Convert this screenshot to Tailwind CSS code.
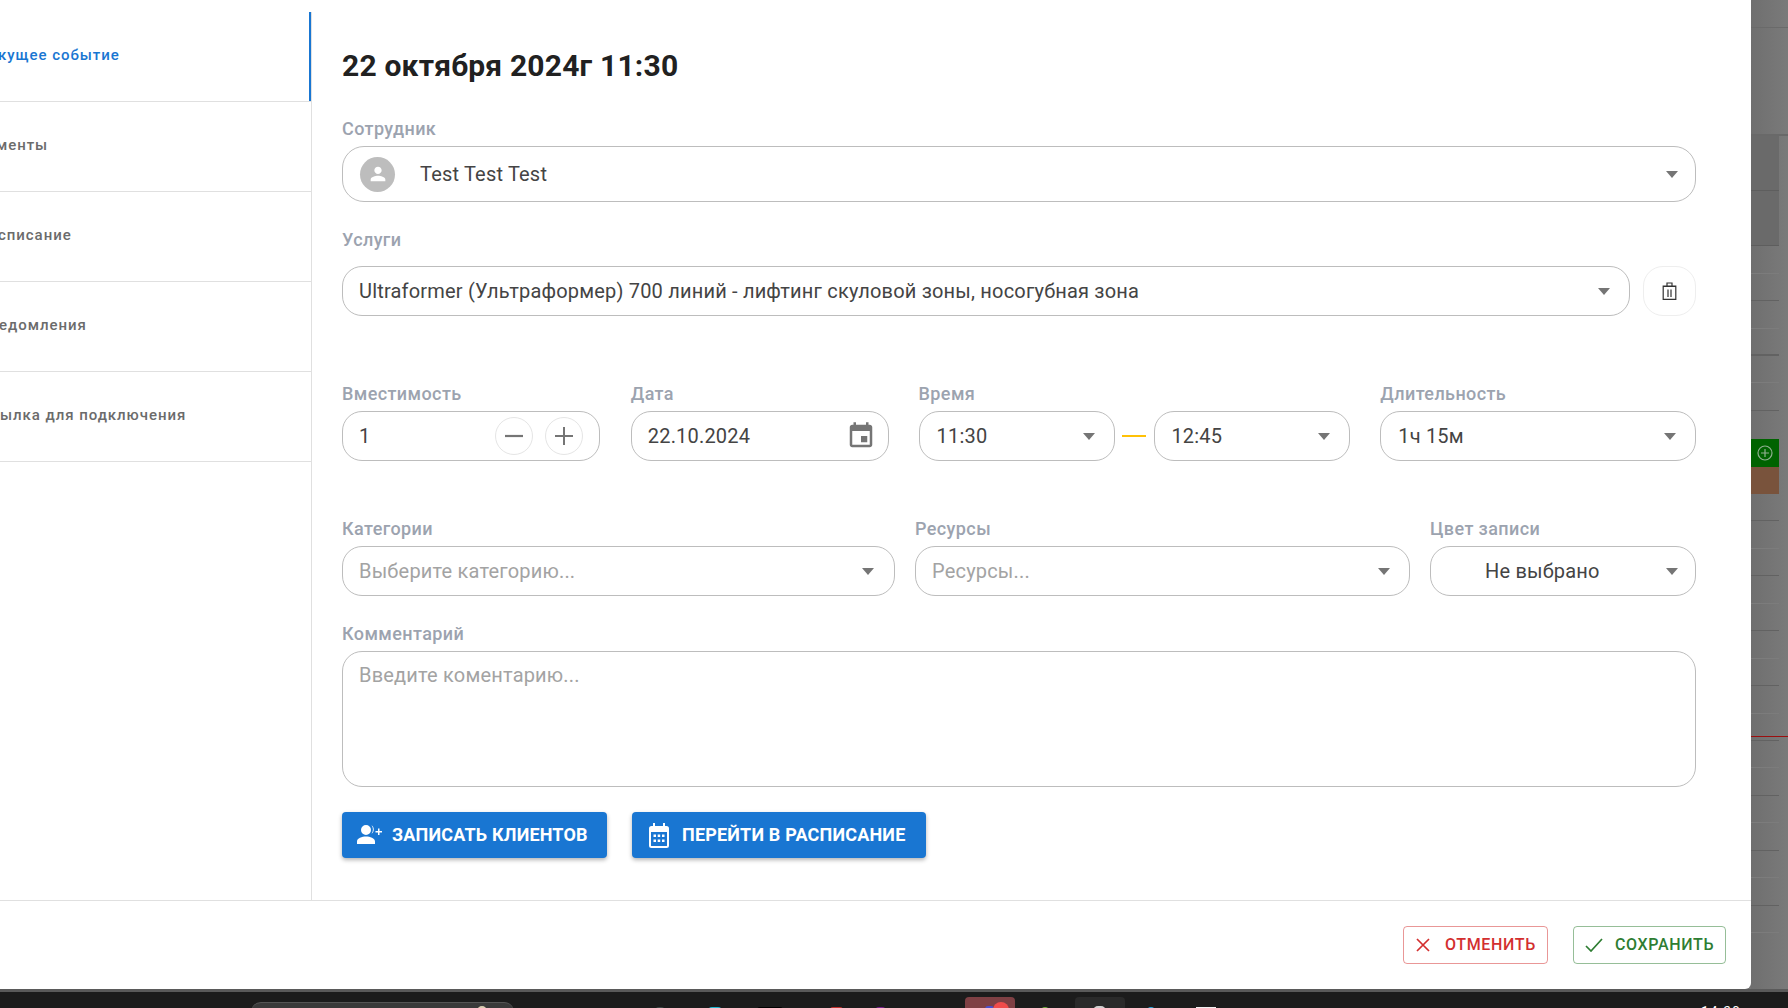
<!DOCTYPE html>
<html lang="ru">

<head>
  <meta charset="UTF-8">
  <title>Событие</title>
  <script src="https://cdn.jsdelivr.net/npm/@tailwindcss/browser@4"></script>
</head>

<body class="relative h-[1008px] w-[1788px] overflow-hidden bg-[#757575] font-['Roboto',sans-serif]">

  <!-- Calendar behind the dialog -->
  <div class="absolute left-[1751px] top-0 h-[992px] w-[37px] bg-gradient-to-r from-[#6f6f6f] to-[#7a7a7a]">
    <div class="h-[28px] border-b border-[#6a6a6a]"></div>
    <div class="h-[108px] border-b-2 border-[#696969]"></div>
    <div class="w-[28px]">
      <div class="h-[55px] border-b border-[#5e5e5e] bg-[#6a6a6a]"></div>
      <div class="h-[55px] border-b border-[#5e5e5e] bg-[#6a6a6a]"></div>
      <div class="h-[28px] border-b border-[#7c7c7c]"></div>
      <div class="h-[27px] border-b border-[#626262]"></div>
      <div class="h-[28px] border-b border-[#7c7c7c]"></div>
      <div class="h-[27px] border-b-2 border-[#626262]"></div>
      <div class="h-[27px] border-b border-[#7c7c7c]"></div>
      <div class="h-[28px] border-b border-[#626262]"></div>
      <div class="h-[28px]"></div>
      <div class="relative flex h-[28px] items-center justify-center bg-[#006300]">
        <svg class="h-[16px] w-[16px]" viewBox="0 0 16 16" fill="none" stroke="#8fb08f" stroke-width="1.2">
          <circle cx="8" cy="8" r="7"></circle>
          <path d="M8 4v8M4 8h8"></path>
        </svg>
      </div>
      <div class="h-[27px] bg-[#79533c]"></div>
      <div class="h-[27px] border-b border-[#626262]"></div>
      <div class="h-[28px] border-b border-[#7c7c7c]"></div>
      <div class="h-[27px] border-b border-[#626262]"></div>
      <div class="h-[28px] border-b border-[#7c7c7c]"></div>
      <div class="h-[27px] border-b border-[#626262]"></div>
      <div class="h-[28px] border-b border-[#7c7c7c]"></div>
      <div class="h-[27px] border-b border-[#626262]"></div>
      <div class="h-[28px] border-b border-[#7c7c7c]"></div>
      <div class="h-[27px] border-b border-[#626262]"></div>
      <div class="h-[27px] border-b border-[#7c7c7c]"></div>
      <div class="h-[28px] border-b border-[#626262]"></div>
      <div class="h-[27px] border-b border-[#7c7c7c]"></div>
      <div class="h-[28px] border-b border-[#626262]"></div>
      <div class="h-[27px] border-b border-[#7c7c7c]"></div>
      <div class="h-[28px] border-b border-[#626262]"></div>
      <div class="h-[27px] border-b border-[#7c7c7c]"></div>
    </div>
    <div class="absolute left-0 right-0 top-[736px] h-px bg-[#9c0f0f]"></div>
  </div>

  <!-- Dialog -->
  <div class="absolute left-0 top-0 flex h-[989px] w-[1751px] flex-col rounded-br-[6px] bg-white">
    <div class="flex h-[901px] border-b border-[#e0e0e0]">

      <!-- Tabs -->
      <nav class="mt-[12px] flex w-[312px] flex-none flex-col border-r border-[#e0e0e0] text-[15px] font-medium tracking-[0.95px] text-[#6b6b6b]">
        <div class="flex h-[89px] items-start whitespace-nowrap border-r-2 border-[#1976d2] pt-[32px] text-[#1976d2]"><span class="-ml-[2px]">кущее событие</span></div>
        <div class="flex h-[90px] items-center whitespace-nowrap border-t border-[#e0e0e0] pb-[2px]"><span class="-ml-[4px]">менты</span></div>
        <div class="flex h-[90px] items-center whitespace-nowrap border-t border-[#e0e0e0] pb-[2px]"><span class="-ml-[2px]">списание</span></div>
        <div class="flex h-[90px] items-center whitespace-nowrap border-t border-[#e0e0e0] pb-[2px]"><span class="-ml-px">едомления</span></div>
        <div class="flex h-[91px] items-center whitespace-nowrap border-y border-[#e0e0e0] pb-[2px]">ылка для подключения</div>
      </nav>

      <!-- Form -->
      <div class="ml-[30px] w-[1354px] flex-none text-[20px] tracking-[0.19px] text-[#444444]">
        <h1 class="mt-[48px] h-[36px] text-[30px] font-bold leading-[36px] tracking-[0.2px] text-[#212121]">22 октября 2024г 11:30</h1>

        <label class="mt-[33px] block h-[29px] text-[18px] font-medium leading-[24px] tracking-[0.4px] text-[#9ca3af]">Сотрудник</label>
        <div class="flex h-[56px] items-center rounded-[22px] border border-[#bdbdbd] pl-[17px] pr-[17px]">
          <span class="flex h-[35px] w-[35px] items-center justify-center rounded-full bg-[#bdbdbd]">
            <svg class="h-[22px] w-[22px]" viewBox="0 0 24 24" fill="#fff">
              <path d="M12 12c2.21 0 4-1.79 4-4s-1.79-4-4-4-4 1.79-4 4 1.79 4 4 4zm0 2c-2.67 0-8 1.34-8 4v2h16v-2c0-2.66-5.33-4-8-4z"></path>
            </svg>
          </span>
          <span class="ml-[25px] flex-1">Test Test Test</span>
          <span class="h-0 w-0 border-x-[6.5px] border-t-[7px] border-x-transparent border-t-[#757575]"></span>
        </div>

        <label class="mt-[26px] block h-[38px] text-[18px] font-medium leading-[24px] tracking-[0.4px] text-[#9ca3af]">Услуги</label>
        <div class="flex gap-[13px]">
          <div class="flex h-[50px] flex-1 items-center rounded-[20px] border border-[#bdbdbd] pl-[16px] pr-[19px]">
            <span class="flex-1">Ultraformer (Ультраформер) 700 линий - лифтинг скуловой зоны, носогубная зона</span>
            <span class="h-0 w-0 border-x-[6.5px] border-t-[7px] border-x-transparent border-t-[#757575]"></span>
          </div>
          <button class="flex h-[50px] w-[53px] items-center justify-center rounded-[20px] border border-[#eeeeee]">
            <svg class="h-[18px] w-[15px]" viewBox="0 0 15 18" fill="none" stroke="#333" stroke-width="1.2">
              <path d="M1.200 4.500h12.600v12.900H1.200zM.6 4.200h13.800M5 4V1h5v3M6 7.500v7.500M9 7.500v7.500"></path>
            </svg>
          </button>
        </div>

        <!-- Capacity, date and time -->
        <div class="mt-[66px] flex">
          <div class="w-[258px]">
            <label class="block h-[29px] text-[18px] font-medium leading-[24px] tracking-[0.4px] text-[#9ca3af]">Вместимость</label>
            <div class="flex h-[50px] items-center rounded-[20px] border border-[#bdbdbd] pl-[16px] pr-[16px]">
              <span class="flex-1">1</span>
              <span class="flex h-[38px] w-[38px] items-center justify-center rounded-full border border-[#e5e5e5]">
                <svg class="h-[18px] w-[18px]" viewBox="0 0 18 18" stroke="#757575" stroke-width="2.2"><path d="M0 9h18"></path></svg>
              </span>
              <span class="ml-[12px] flex h-[38px] w-[38px] items-center justify-center rounded-full border border-[#e5e5e5]">
                <svg class="h-[18px] w-[18px]" viewBox="0 0 18 18" stroke="#757575" stroke-width="2"><path d="M0 9h18M9 0v18"></path></svg>
              </span>
            </div>
          </div>
          <div class="ml-[31px] w-[258px]">
            <label class="block h-[29px] text-[18px] font-medium leading-[24px] tracking-[0.4px] text-[#9ca3af]">Дата</label>
            <div class="flex h-[50px] items-center rounded-[20px] border border-[#bdbdbd] pl-[16px] pr-[12px]">
              <span class="flex-1">22.10.2024</span>
              <svg class="h-[30px] w-[30px]" viewBox="0 0 24 24" fill="#757575">
                <path d="M17 12h-5v5h5v-5zM16 1v2H8V1H6v2H5c-1.11 0-1.990.9-1.990 2L3 19c0 1.100.89 2 2 2h14c1.100 0 2-.9 2-2V5c0-1.100-.9-2-2-2h-1V1h-2zm3 18H5V8h14v11z"></path>
              </svg>
            </div>
          </div>
          <div class="ml-[30px] w-[197px]">
            <label class="block h-[29px] text-[18px] font-medium leading-[24px] tracking-[0.4px] text-[#9ca3af]">Время</label>
            <div class="flex h-[50px] items-center rounded-[20px] border border-[#bdbdbd] pl-[17px] pr-[19px]">
              <span class="flex-1">11:30</span>
              <span class="h-0 w-0 border-x-[6.5px] border-t-[7px] border-x-transparent border-t-[#757575]"></span>
            </div>
          </div>
          <div class="ml-[7px] mr-[8px] mt-[53px] h-[2px] w-[24px] bg-[#ffc107]"></div>
          <div class="mt-[29px] flex h-[50px] w-[196px] items-center rounded-[20px] border border-[#bdbdbd] pl-[16px] pr-[19px]">
            <span class="flex-1">12:45</span>
            <span class="h-0 w-0 border-x-[6.5px] border-t-[7px] border-x-transparent border-t-[#757575]"></span>
          </div>
          <div class="ml-[30px] w-[316px]">
            <label class="block h-[29px] text-[18px] font-medium leading-[24px] tracking-[0.4px] text-[#9ca3af]">Длительность</label>
            <div class="flex h-[50px] items-center rounded-[20px] border border-[#bdbdbd] pl-[17px] pr-[19px]">
              <span class="flex-1">1ч 15м</span>
              <span class="h-0 w-0 border-x-[6.5px] border-t-[7px] border-x-transparent border-t-[#757575]"></span>
            </div>
          </div>
        </div>

        <!-- Categories, resources, colour -->
        <div class="mt-[56px] flex">
          <div class="w-[553px]">
            <label class="block h-[29px] text-[18px] font-medium leading-[24px] tracking-[0.4px] text-[#9ca3af]">Категории</label>
            <div class="flex h-[50px] items-center rounded-[20px] border border-[#bdbdbd] pl-[16px] pr-[20px] text-[#a3a3a3]">
              <span class="flex-1">Выберите категорию...</span>
              <span class="h-0 w-0 border-x-[6.5px] border-t-[7px] border-x-transparent border-t-[#757575]"></span>
            </div>
          </div>
          <div class="ml-[20px] w-[495px]">
            <label class="block h-[29px] text-[18px] font-medium leading-[24px] tracking-[0.4px] text-[#9ca3af]">Ресурсы</label>
            <div class="flex h-[50px] items-center rounded-[20px] border border-[#bdbdbd] pl-[16px] pr-[19px] text-[#a3a3a3]">
              <span class="flex-1">Ресурсы...</span>
              <span class="h-0 w-0 border-x-[6.5px] border-t-[7px] border-x-transparent border-t-[#757575]"></span>
            </div>
          </div>
          <div class="ml-[20px] w-[266px]">
            <label class="block h-[29px] text-[18px] font-medium leading-[24px] tracking-[0.4px] text-[#9ca3af]">Цвет записи</label>
            <div class="flex h-[50px] items-center rounded-[20px] border border-[#bdbdbd] pl-[54px] pr-[17px]">
              <span class="flex-1">Не выбрано</span>
              <span class="h-0 w-0 border-x-[6.5px] border-t-[7px] border-x-transparent border-t-[#757575]"></span>
            </div>
          </div>
        </div>

        <label class="mt-[26px] block h-[29px] text-[18px] font-medium leading-[24px] tracking-[0.4px] text-[#9ca3af]">Комментарий</label>
        <div class="h-[136px] rounded-[20px] border border-[#bdbdbd] px-[16px] pt-[8px] text-[#a3a3a3]">Введите коментарию...</div>

        <div class="mt-[25px] flex gap-[25px] text-[18px] font-bold tracking-[0.18px] text-white">
          <button class="flex h-[46px] w-[265px] items-center rounded-[4px] bg-[#1976d2] pl-[14px] uppercase shadow-[0_2px_4px_rgba(0,0,0,0.3)]">
            <svg class="h-[26px] w-[26px]" viewBox="0 0 26 26" fill="#fff">
              <path d="M10 3a5 5 0 1 1 0 10 5 5 0 0 1 0-10zM1 22v-2.500c0-3.500 5-5 9-5s9 1.500 9 5V22zM15.500 3.200c3 1.500 3 7 0 8.600 1.900-2.500 1.900-6 0-8.600zM19.500 9h2.500V6.500h1.500V9H26v1.500h-2.500V13H22v-2.500h-2.500z"></path>
            </svg>
            <span class="-mt-[2px] ml-[10px]">Записать клиентов</span>
          </button>
          <button class="flex h-[46px] w-[294px] items-center rounded-[4px] bg-[#1976d2] pl-[17px] uppercase shadow-[0_2px_4px_rgba(0,0,0,0.3)]">
            <svg class="h-[26px] w-[20px]" viewBox="0 0 20 26" fill="#fff">
              <path d="M4 1h2v3h8V1h2v3h1.500A2.500 2.500 0 0 1 20 6.500v17a2.500 2.500 0 0 1-2.500 2.500h-15A2.500 2.500 0 0 1 0 23.500v-17A2.500 2.500 0 0 1 2.500 4H4zM2 10v13.500a.5.500 0 0 0 .5.500h15a.5.500 0 0 0 .5-.5V10zM4.500 12.500h2.500V15H4.500zM8.700 12.500h2.500V15H8.700zM13 12.500h2.500V15H13zM4.500 17.500h2.500V20H4.500zM8.700 17.500h2.500V20H8.700zM13 17.500h2.500V20H13z"></path>
            </svg>
            <span class="-mt-[2px] ml-[13px]">Перейти в расписание</span>
          </button>
        </div>
      </div>
    </div>

    <!-- Footer -->
    <div class="flex flex-1 items-start justify-end gap-[25px] pr-[25px] pt-[25px] text-[16px] font-medium tracking-[0.65px]">
      <button class="flex h-[38px] w-[145px] items-center rounded-[4px] border border-[#d32f2f]/50 pl-[12px] uppercase text-[#d32f2f]">
        <svg class="h-[14px] w-[14px]" viewBox="0 0 14 14" stroke="#d32f2f" stroke-width="1.7"><path d="M1 1l12 12M13 1L1 13"></path></svg>
        <span class="ml-[15px]">Отменить</span>
      </button>
      <button class="flex h-[38px] w-[153px] items-center rounded-[4px] border border-[#2e7d32]/50 pl-[11px] uppercase text-[#2e7d32]">
        <svg class="h-[14px] w-[18px]" viewBox="0 0 18 14" fill="none" stroke="#2e7d32" stroke-width="1.7"><path d="M1 8l5 5L17 1"></path></svg>
        <span class="ml-[12px]">Сохранить</span>
      </button>
    </div>
  </div>

  <!-- Taskbar, cut off by the window bottom -->
  <div class="absolute inset-x-0 bottom-0 h-[19px] border-t-[3px] border-[#5a5a5a] bg-[#1c1c1c]">
    <div class="absolute left-[251px] top-[10px] h-[10px] w-[263px] rounded-t-[14px] border-t border-[#555] bg-[#3a3a3a]"></div>
    <div class="absolute left-[477px] top-[14px] h-[6px] w-[10px] rounded-t-full bg-[#d8cdb0]"></div>
    <div class="absolute left-[655px] top-[15px] h-[4px] w-[10px] rounded-t-full bg-[#3f4a48]"></div>
    <div class="absolute left-[708px] top-[15px] h-[4px] w-[14px] rounded-t-full bg-[#1fb6d0]"></div>
    <div class="absolute left-[757px] top-[15px] h-[4px] w-[26px] rounded-t-[3px] bg-black"></div>
    <div class="absolute left-[830px] top-[15px] h-[4px] w-[13px] rounded-t-[3px] bg-[#c0302c]"></div>
    <div class="absolute left-[875px] top-[15px] h-[4px] w-[11px] rounded-t-full bg-[#7a1f8f]"></div>
    <div class="absolute left-[965px] top-[5px] h-[14px] w-[50px] rounded-t-[4px] bg-[#7f4044]"></div>
    <div class="absolute left-[985px] top-[14px] h-[6px] w-[9px] rounded-t-[3px] bg-[#4a4fd0]"></div>
    <div class="absolute left-[993px] top-[10px] h-[16px] w-[16px] rounded-full bg-[#f04b4b]"></div>
    <div class="absolute left-[1041px] top-[15px] h-[4px] w-[8px] rounded-t-full bg-[#6fae3c]"></div>
    <div class="absolute left-[1075px] top-[5px] h-[14px] w-[50px] rounded-t-[4px] bg-[#2a2a2a]"></div>
    <div class="absolute left-[1093px] top-[14px] h-[5px] w-[13px] rounded-t-full bg-[#cfcfcf]"></div>
    <div class="absolute left-[1147px] top-[15px] h-[4px] w-[8px] rounded-t-full bg-[#29a8e0]"></div>
    <div class="absolute left-[1196px] top-[15px] h-[4px] w-[20px] bg-[#f0f0f0]"></div>
    <div class="absolute left-[1701px] top-[12px] text-[14px] leading-[16px] tracking-[1px] text-white">14:30</div>
  </div>
</body>

</html>
